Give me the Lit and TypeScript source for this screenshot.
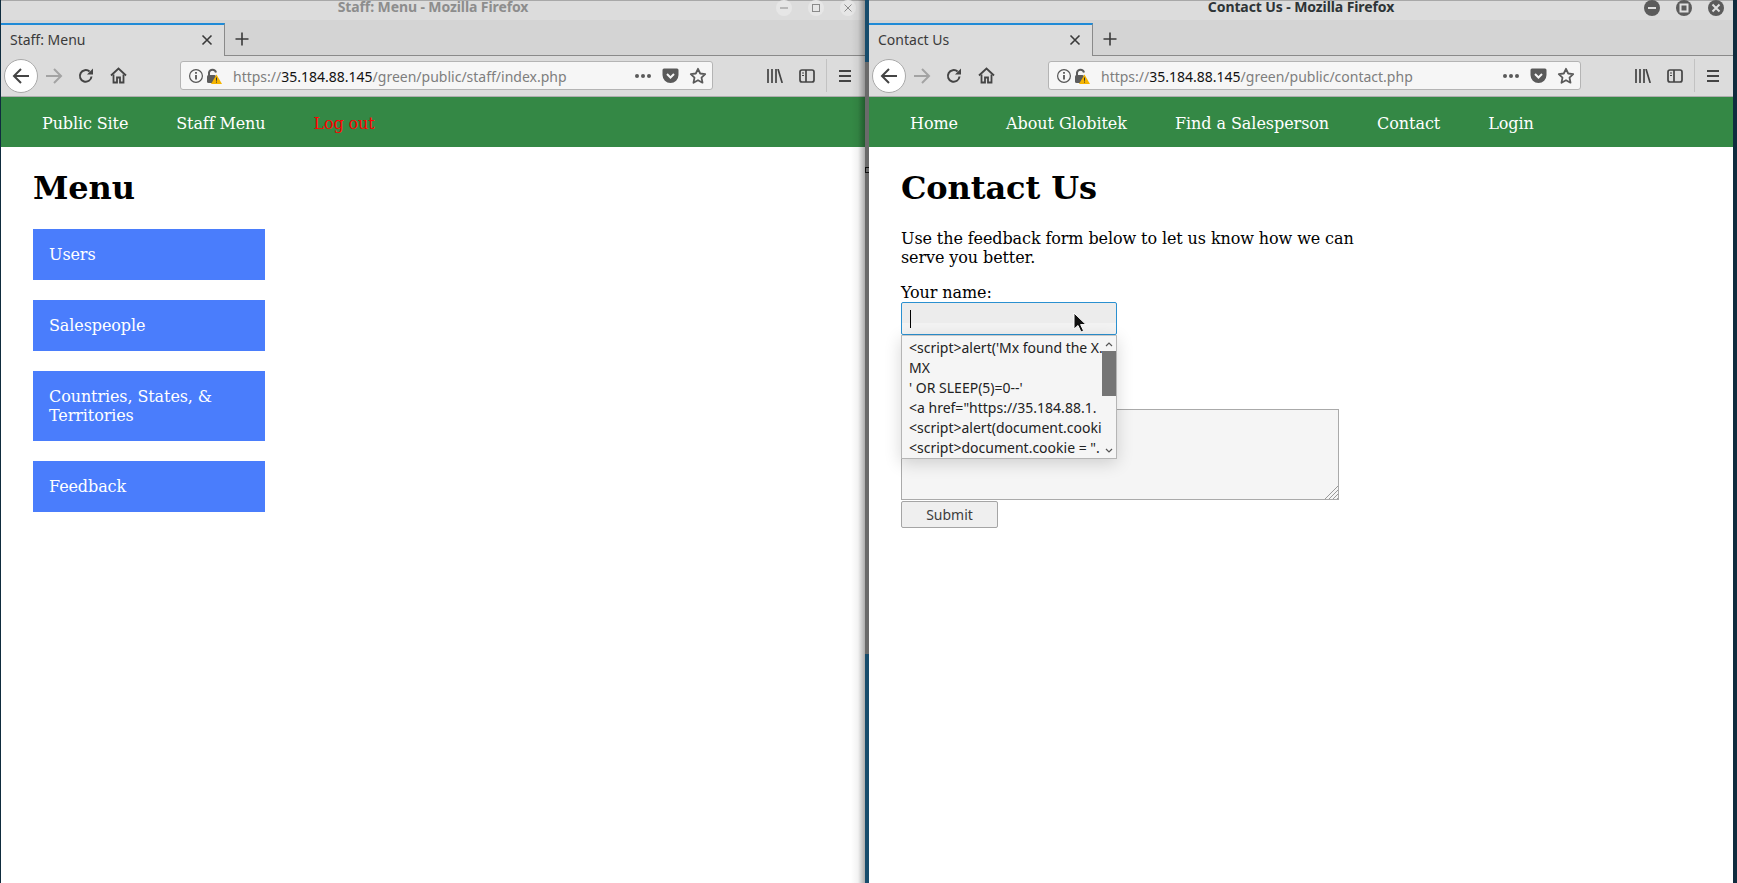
import { LitElement, html, css } from 'lit';
import { customElement, property } from 'lit/decorators.js';

const UI_FONT = css`"Noto Sans", "Open Sans", sans-serif`;
const PAGE_FONT = css`"DejaVu Serif", serif`;

@customElement('ff-window')
export class FfWindow extends LitElement {
  static styles = css`
    :host {
      display: flex;
      flex-direction: column;
      position: relative;
      width: 864px;
      height: 883px;
      overflow: hidden;
      background: #fff;
    }

    .titlebar {
      height: 20px;
      flex: none;
      box-sizing: border-box;
      background: linear-gradient(to bottom, #a8a8a8 1px, #dcdcdc 1px);
      display: flex;
      justify-content: center;
      position: relative;
      font-family: ${UI_FONT};
    }

    .title {
      font-size: 14px;
      font-weight: 700;
      line-height: 14px;
      letter-spacing: -0.1px;
      color: #8d8d8d;
    }

    :host([active]) .title { color: #2e3436; }

    .controls {
      position: absolute;
      right: 9px;
      top: 0;
      display: flex;
      gap: 16px;
    }

    .control {
      width: 16px;
      height: 16px;
      border-radius: 50%;
      background: #e6e6e6;
      color: #8a8a8a;
      display: flex;
      align-items: center;
      justify-content: center;
    }

    :host([active]) .control {
      background: #5c5c5c;
      color: #e0e0e0;
    }

    .control svg { width: 10px; height: 10px; }

    .tabbar {
      height: 36px;
      flex: none;
      box-sizing: border-box;
      background: #d4d4d4;
      border-bottom: 1px solid #8a8a8a;
      padding-top: 3px;
      display: flex;
      font-family: ${UI_FONT};
    }

    .tab {
      width: 224px;
      box-sizing: border-box;
      border-top: 2px solid #1f8ad6;
      border-right: 1px solid #8a8a8a;
      background: #dcdcdc;
      height: 33px;
      padding: 0 11px 2px 9px;
      display: flex;
      align-items: center;
      justify-content: space-between;
      font-size: 14px;
      color: #3a3a3a;
    }

    .tab svg { width: 12px; height: 12px; color: #3a3a3a; }

    .newtab {
      width: 34px;
      display: flex;
      align-items: center;
      justify-content: center;
      color: #3a3a3a;
    }

    .newtab svg { width: 16px; height: 16px; }

    .toolbar {
      height: 41px;
      flex: none;
      box-sizing: border-box;
      background: #dcdcdc;
      border-bottom: 1px solid #aeaeae;
      display: flex;
      align-items: center;
      padding: 0 0 1px 3px;
      color: #444;
      font-family: ${UI_FONT};
    }

    .toolbar svg { display: block; }

    .back {
      width: 32px;
      height: 32px;
      border-radius: 50%;
      border: 1px solid #a9a9a9;
      background: #fff;
      display: flex;
      align-items: center;
      justify-content: center;
      flex: none;
    }

    .tool {
      width: 32px;
      height: 32px;
      display: flex;
      align-items: center;
      justify-content: center;
      flex: none;
    }

    .tool.off { color: #a3a3a3; }

    .urlbar {
      margin-left: 46px;
      width: 533px;
      height: 29px;
      flex: none;
      box-sizing: border-box;
      border: 1px solid #b4b4b4;
      border-radius: 3px;
      background: #f6f6f6;
      display: flex;
      align-items: center;
      padding-left: 7px;
    }

    .url {
      margin-left: 11px;
      padding-top: 1px;
      font-size: 14px;
      color: #7e7e7e;
      white-space: nowrap;
    }

    .url b { font-weight: 400; color: #111; }

    .url-end {
      margin-left: auto;
      display: flex;
      align-items: center;
      gap: 8px;
      padding-right: 5px;
      color: #5a5a5a;
    }

    .right-tools {
      margin-left: 46px;
      display: flex;
      align-items: center;
    }

    .sep {
      width: 1px;
      height: 33px;
      background: #c2c2c2;
      margin: 0 2px 0 3px;
    }

    .shade {
      position: absolute;
      top: 0;
      right: 0;
      bottom: 0;
      width: 14px;
      background: linear-gradient(to right, rgba(0, 0, 0, 0), rgba(0, 0, 0, 0.05) 50%, rgba(0, 0, 0, 0.32));
      pointer-events: none;
      display: none;
    }

    :host(:not([active])) .shade { display: block; }

    .page {
      flex: 1;
      position: relative;
      font-family: ${PAGE_FONT};
      letter-spacing: -0.1px;
    }
  `;

  @property({ type: String }) heading = '';
  @property({ type: String }) tab = '';
  @property({ type: String }) path = '';
  @property({ type: Boolean, reflect: true }) active = false;

  render() {
    return html`
      <div class="titlebar">
        <span class="title">${this.heading}</span>
        <div class="controls">
          <div class="control"><svg viewBox="0 0 10 10" fill="none" stroke="currentColor" stroke-width="${this.active ? 2 : 1}"><path d="M1 5h8"/></svg></div>
          <div class="control"><svg viewBox="0 0 10 10" fill="none" stroke="currentColor" stroke-width="${this.active ? 2 : 1}"><rect x="1.5" y="1.5" width="7" height="7"/></svg></div>
          <div class="control"><svg viewBox="0 0 10 10" fill="none" stroke="currentColor" stroke-width="${this.active ? 2 : 1}"><path d="M1.5 1.5l7 7M8.5 1.5l-7 7"/></svg></div>
        </div>
      </div>
      <div class="tabbar">
        <div class="tab">
          <span>${this.tab}</span>
          <svg viewBox="0 0 12 12" fill="none" stroke="currentColor" stroke-width="1.6"><path d="M1.5 1.5l9 9M10.5 1.5l-9 9"/></svg>
        </div>
        <div class="newtab">
          <svg viewBox="0 0 16 16" fill="none" stroke="currentColor" stroke-width="1.6"><path d="M8 1.5v13M1.5 8h13"/></svg>
        </div>
      </div>
      <div class="toolbar">
        <div class="back">
          <svg width="18" height="18" viewBox="0 0 18 18" fill="none" stroke="currentColor" stroke-width="2"><path d="M17 9H2M9 2L2 9l7 7"/></svg>
        </div>
        <div class="tool off">
          <svg width="18" height="18" viewBox="0 0 18 18" fill="none" stroke="currentColor" stroke-width="2"><path d="M1 9h15M9 2l7 7-7 7"/></svg>
        </div>
        <div class="tool">
          <svg width="16" height="16" viewBox="0 0 16 16" fill="none" stroke="currentColor" stroke-width="2"><path d="M13.5 8.5A5.8 5.8 0 1 1 11.6 3.6"/><path d="M15 0.5v6H9z" fill="currentColor" stroke="none"/></svg>
        </div>
        <div class="tool">
          <svg width="17" height="17" viewBox="0 0 17 17" fill="none" stroke="currentColor" stroke-width="1.8"><path d="M1 8.5L8.5 1.5 16 8.5"/><path d="M3.5 7.5V15.5h3.5V10.5h3V15.5h3.5V7.5"/></svg>
        </div>
        <div class="urlbar">
          <svg width="16" height="16" viewBox="0 0 16 16" fill="none" stroke="#555" stroke-width="1.2"><circle cx="8" cy="8" r="6.4"/><path d="M8 7v4.6" stroke-width="1.8"/><path d="M8 4v1.8" stroke-width="1.8"/></svg>
          <svg width="16" height="18" viewBox="0 0 16 18" style="margin-left:2px">
            <path d="M3 9V5.5a3.6 3.6 0 0 1 7 0" fill="none" stroke="#5c5c5c" stroke-width="2"/>
            <rect x="1" y="8" width="9" height="8" rx="1.5" fill="#5c5c5c"/>
            <path d="M10.5 7.5L16 17H5z" fill="#f5b400"/>
            <path d="M10.5 10.5v3.2M10.5 14.6v1" stroke="#333" stroke-width="1"/>
          </svg>
          <span class="url">https://<b>35.184.88.145</b>${this.path}</span>
          <div class="url-end">
            <svg width="18" height="6" viewBox="0 0 18 6" fill="currentColor"><circle cx="3" cy="3" r="2"/><circle cx="9" cy="3" r="2"/><circle cx="15" cy="3" r="2"/></svg>
            <svg width="17" height="16" viewBox="0 0 17 16" style="margin-left:2px"><path d="M2 0.5h13a1.5 1.5 0 0 1 1.5 1.5v5a8 8 0 0 1-16 0V2A1.5 1.5 0 0 1 2 0.5z" fill="currentColor"/><path d="M5 6l3.5 3.5L12 6" fill="none" stroke="#f6f6f6" stroke-width="2"/></svg>
            <svg width="18" height="18" viewBox="0 0 18 18" fill="none" stroke="currentColor" stroke-width="1.8" stroke-linejoin="round" style="margin-left:2px"><path d="M9 1.8l2.2 4.7 5 .6-3.7 3.5 1 5.1L9 13.2l-4.5 2.5 1-5.1L1.8 7.1l5-.6z"/></svg>
          </div>
        </div>
        <div class="right-tools">
          <div class="tool">
            <svg width="16" height="14" viewBox="0 0 16 14" fill="none" stroke="currentColor" stroke-width="1.7"><path d="M1 0v14M5 0v14M9 0v14M11 0l4.2 14"/></svg>
          </div>
          <div class="tool">
            <svg width="16" height="14" viewBox="0 0 16 14" fill="none" stroke="currentColor" stroke-width="1.7"><rect x="1" y="1" width="14" height="12" rx="2"/><path d="M7 1v12"/><path d="M3 4h2M3 6.5h2" stroke-width="1.2"/></svg>
          </div>
          <div class="sep"></div>
          <div class="tool">
            <svg width="14" height="12" viewBox="0 0 14 12" fill="none" stroke="currentColor" stroke-width="1.8"><path d="M1 1h12M1 6h12M1 11h12"/></svg>
          </div>
        </div>
      </div>
      <div class="page"><slot></slot></div>
      <div class="shade"></div>
    `;
  }
}

@customElement('app-root')
export class AppRoot extends LitElement {
  static styles = css`
    :host {
      display: flex;
      width: 1737px;
      height: 883px;
      overflow: hidden;
      background: #0f2c3e;
      font-size: 16px;
      line-height: 19px;
      color: #000;
    }

    .edge { width: 1px; flex: none; }
    .edge.wide { width: 4px; }

    .divider {
      position: relative;
      width: 4px;
      flex: none;
      background: linear-gradient(to bottom, #174c6c 62px, #6a6a6a 62px, #6a6a6a 654px, #174c6c 654px);
    }

    /* resize handle notch on the tiling border */
    .divider::after {
      content: '';
      position: absolute;
      left: 0;
      top: 167px;
      width: 4px;
      height: 6px;
      box-sizing: border-box;
      border: 1px solid #111;
      border-right: none;
    }

    .nav {
      height: 50px;
      box-sizing: border-box;
      background: #348845;
      display: flex;
      align-items: center;
      gap: 48px;
      padding: 2px 0 0 41px;
      letter-spacing: -0.06px;
    }

    .nav.staff { letter-spacing: -0.12px; }

    .nav a {
      color: #fff;
      text-decoration: none;
    }

    .nav a.danger { color: #f00; }

    main { padding: 22px 32px 0; }

    h1 {
      margin: 0 0 22px;
      font-size: 32px;
      line-height: 38px;
      font-weight: 700;
    }

    .menu {
      width: 232px;
      display: flex;
      flex-direction: column;
      gap: 20px;
    }

    .menu a {
      display: block;
      padding: 16px;
      background: #4a7dfc;
      color: #fff;
      text-decoration: none;
    }

    p { margin: 0 0 16px; width: 480px; }

    label { display: block; }

    .combo {
      position: relative;
      width: 216px;
      height: 33px;
      margin-bottom: 74px;
    }

    input {
      display: block;
      width: 100%;
      height: 100%;
      box-sizing: border-box;
      border: 1px solid #2a90d0;
      border-radius: 2px;
      background: linear-gradient(to bottom, #ececec 65%, #f3f3f3 65%);
      outline: none;
      padding: 0;
    }

    .caret {
      position: absolute;
      left: 9px;
      top: 8px;
      width: 1px;
      height: 18px;
      background: #000;
    }

    .pointer {
      position: absolute;
      left: 172px;
      top: 10px;
      width: 14px;
      height: 21px;
    }

    .suggest {
      position: absolute;
      left: 0;
      top: 33px;
      width: 216px;
      height: 124px;
      box-sizing: border-box;
      border: 1px solid #b5b5b5;
      border-top-color: #c8c8c8;
      background: #f5f5f5;
      box-shadow: 0 4px 16px rgba(0, 0, 0, 0.16);
      display: flex;
      font-family: ${UI_FONT};
      font-size: 14px;
      line-height: 20px;
      letter-spacing: 0;
      color: #222;
      z-index: 2;
    }

    .rows {
      flex: 1;
      min-width: 0;
      padding: 2px 0 0 7px;
      white-space: nowrap;
    }

    .scroll {
      width: 14px;
      flex: none;
      display: flex;
      flex-direction: column;
      align-items: center;
      color: #555;
    }

    .scroll svg { width: 8px; height: 5px; margin: 6px 0 5px; flex: none; }
    .scroll svg.down { margin: auto 0 5px; }

    .thumb {
      width: 14px;
      height: 45px;
      margin-top: -1px;
      background: #757575;
    }

    .area {
      position: relative;
      width: 438px;
      height: 91px;
      margin-bottom: 1px;
    }

    textarea {
      display: block;
      width: 100%;
      height: 100%;
      box-sizing: border-box;
      border: 1px solid #aaa;
      background: #f5f5f5;
      resize: none;
      outline: none;
      margin: 0;
    }

    .grip {
      position: absolute;
      right: 1px;
      bottom: 1px;
      width: 13px;
      height: 13px;
    }

    button {
      display: block;
      width: 97px;
      height: 27px;
      margin: 0;
      padding: 0;
      box-sizing: border-box;
      border: 1px solid #a5a5a5;
      border-radius: 2px;
      background: #efefef;
      font-family: ${UI_FONT};
      font-size: 14px;
      color: #3d3d3d;
    }
  `;

  private _staff = ['Users', 'Salespeople', 'Countries, States, & Territories', 'Feedback'];

  // form history as it reads in the popup, already cut by the browser
  private _history = [
    `<script>alert('Mx found the X.`,
    'MX',
    `' OR SLEEP(5)=0--'`,
    '<a href="https://35.184.88.1.',
    '<script>alert(document.cooki',
    '<script>document.cookie = ".',
  ];

  render() {
    return html`
      <div class="edge"></div>
      <ff-window heading="Staff: Menu - Mozilla Firefox" tab="Staff: Menu" path="/green/public/staff/index.php">
        <nav class="nav staff">
          <a href="#">Public Site</a>
          <a href="#">Staff Menu</a>
          <a href="#" class="danger">Log out</a>
        </nav>
        <main>
          <h1>Menu</h1>
          <div class="menu">
            ${this._staff.map((item) => html`<a href="#">${item}</a>`)}
          </div>
        </main>
      </ff-window>
      <div class="divider"></div>
      <ff-window active heading="Contact Us - Mozilla Firefox" tab="Contact Us" path="/green/public/contact.php">
        <nav class="nav">
          <a href="#">Home</a>
          <a href="#">About Globitek</a>
          <a href="#">Find a Salesperson</a>
          <a href="#">Contact</a>
          <a href="#">Login</a>
        </nav>
        <main>
          <h1>Contact Us</h1>
          <p>Use the feedback form below to let us know how we can serve you better.</p>
          <label>Your name:</label>
          <div class="combo">
            <input type="text" />
            <div class="caret"></div>
            <svg class="pointer" viewBox="0 0 14 21"><path d="M1 1v16l4-3.5 3 6.5 2.6-1.2-3-6.2H13z" fill="#111" stroke="#fff" stroke-width="1"/></svg>
            <div class="suggest">
              <div class="rows">
                ${this._history.map((row) => html`<div>${row}</div>`)}
              </div>
              <div class="scroll">
                <svg viewBox="0 0 8 5" fill="none" stroke="currentColor" stroke-width="1.2"><path d="M1 4l3-3 3 3"/></svg>
                <div class="thumb"></div>
                <svg class="down" viewBox="0 0 8 5" fill="none" stroke="currentColor" stroke-width="1.2"><path d="M1 1l3 3 3-3"/></svg>
              </div>
            </div>
          </div>
          <div class="area">
            <textarea></textarea>
            <svg class="grip" viewBox="0 0 13 13" fill="none" stroke="#9a9a9a" stroke-width="1"><path d="M13 0L0 13M13 4L4 13M13 8L8 13M13 12l-1 1"/></svg>
          </div>
          <button>Submit</button>
        </main>
      </ff-window>
      <div class="edge wide"></div>
    `;
  }
}
